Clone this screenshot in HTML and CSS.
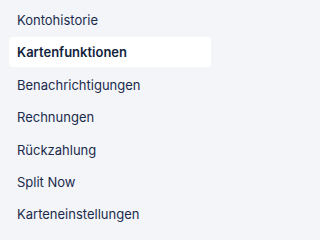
FILE: index.html
```html
<!DOCTYPE html>
<html lang="de">
<head>
<meta charset="utf-8">
<link rel="stylesheet" href="styles.css">
</head>
<body>
<nav class="menu">
  <a class="item">Kontohistorie</a>
  <a class="item active">Kartenfunktionen</a>
  <a class="item">Benachrichtigungen</a>
  <a class="item">Rechnungen</a>
  <a class="item">Rückzahlung</a>
  <a class="item">Split Now</a>
  <a class="item">Karteneinstellungen</a>
</nav>
</body>
</html>
```
FILE: styles.css
```css
html, body {
  margin: 0;
  padding: 0;
  background: #f3f5f9;
}
.menu {
  box-sizing: border-box;
  width: 220px;
  display: flex;
  flex-direction: column;
  gap: 2.4px;
  padding: 5px 9px 0 9px;
  font-family: Inter, "Noto Sans", sans-serif;
  font-size: 13px;
  color: #1b2b4c;
}
.item {
  display: flex;
  align-items: center;
  height: 30px;
  padding-left: 8px;
  border-radius: 4px;
}
.active {
  background: #ffffff;
  font-weight: 600;
  color: #121f3d;
}
```
